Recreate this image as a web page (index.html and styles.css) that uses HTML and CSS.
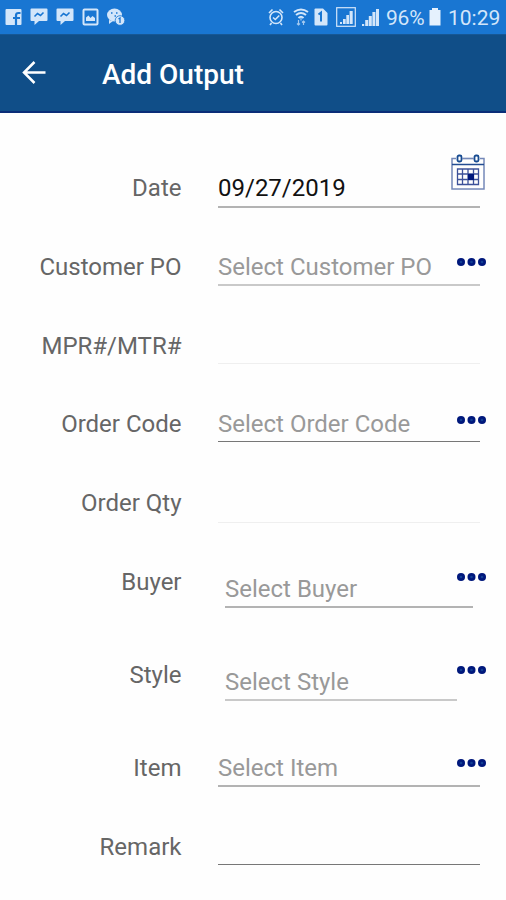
FILE: index.html
```html
<!DOCTYPE html>
<html lang="en">
<head>
<meta charset="utf-8">
<title>Add Output</title>
<link rel="stylesheet" href="styles.css">
</head>
<body>
<svg class="defs" width="0" height="0">
  <symbol id="dots" viewBox="0 0 30 10"><g fill="#00187c"><circle cx="5" cy="5" r="4"/><circle cx="15.500" cy="5" r="4"/><circle cx="26" cy="5" r="4"/></g><g fill="#123f93"><circle cx="5" cy="5" r="1.300"/><circle cx="15.500" cy="5" r="1.300"/><circle cx="26" cy="5" r="1.300"/></g></symbol>
  <symbol id="chat" viewBox="0 0 18 18"><path fill="#d3e6fa" d="M1.500 0.500h15q1 0 1 1v10.500q0 1-1 1H9l-4.500 4v-4h-3q-1 0-1-1V1.500q0-1 1-1z"/><path d="M4.500 8.500l3-3 3 2 3-3" fill="none" stroke="#1976d2" stroke-width="1.600"/></symbol>
</svg>
<div class="status">
  <div class="notices">
    <svg width="17" height="18" viewBox="0 0 17 18"><rect x="0.500" y="1" width="16" height="16" rx="1" fill="#d3e6fa"/><path d="M11 17V7.500q0-2.500 2.500-2.500h2M8 10h7" fill="none" stroke="#1976d2" stroke-width="2.200"/></svg>
    <svg width="18" height="18"><use href="#chat"/></svg>
    <svg width="18" height="18"><use href="#chat"/></svg>
    <svg width="17" height="18" viewBox="0 0 17 18"><rect x="1.500" y="1.500" width="14" height="15" rx="1" fill="none" stroke="#d3e6fa" stroke-width="2"/><path d="M4 13V9.500l2.500-2 2 2.500 2-2 2.500 2V13z" fill="#d3e6fa"/></svg>
    <svg width="18" height="18" viewBox="0 0 18 18"><ellipse cx="7.500" cy="7" rx="7.500" ry="6.500" fill="#d3e6fa"/><path d="M2 12v4l4-3z" fill="#d3e6fa"/><path d="M4 5h1.500M9 5h1.500M7.500 8h1.500" stroke="#1976d2" stroke-width="1.500"/><circle cx="13" cy="12.500" r="4.800" fill="#d3e6fa" stroke="#1976d2" stroke-width=".8"/><path d="M11.500 11l1.500-1v5" fill="none" stroke="#1976d2" stroke-width="1.300"/></svg>
  </div>
  <div class="system">
    <svg class="alarm" width="16" height="18" viewBox="0 0 16 18" fill="none" stroke="#d3e6fa" stroke-width="1.600"><circle cx="8" cy="9.500" r="6"/><path d="M1 5l3.500-3.500M15 5l-3.500-3.500M5 9.500l2.300 2 4-4M3.500 15L2 17M12.500 15l1.500 2"/></svg>
    <svg class="wifi" width="16" height="18" viewBox="0 0 16 18" fill="none" stroke="#d3e6fa" stroke-width="2"><path d="M1 4q7-5 14 0M3 7q5-4 10 0M5.500 10q2.500-2.500 5 0"/><path d="M8 10v2.500M5.500 12v5M4 15.500l1.500 1.500L7 15.500M10.500 17v-4M9 14.500l1.500-1.500 1.500 1.500" stroke-width="1.200" opacity=".75"/></svg>
    <svg class="sim" width="14" height="18" viewBox="0 0 14 18"><path d="M1.500 0.500H9l4.500 4.500v11.500q0 1-1 1h-11q-1 0-1-1v-15q0-1 1-1z" fill="#d3e6fa"/><path d="M4.500 6.500l2.500-2v9" fill="none" stroke="#1976d2" stroke-width="2"/></svg>
    <svg class="boxed" width="20" height="20" viewBox="0 0 20 20"><rect x=".7" y=".7" width="18.600" height="18.600" fill="none" stroke="#d3e6fa" stroke-width="1.200"/><path d="M4 17v-2h2v2zM7 17v-5h2.700v5zM10.300 17V8H13v9zM13.600 17V4h3.100v13z" fill="#d3e6fa"/></svg>
    <svg class="signal" width="17" height="18" viewBox="0 0 17 18"><path d="M0 18v-2h2.200v2zM3.200 18v-6h3v6zM6.800 18V8h3v10zM10.400 18V4h3v14zM14 18V1h3v17z" fill="#d3e6fa"/></svg>
    <span class="percent">96%</span>
    <svg class="battery" width="12" height="18" viewBox="0 0 12 18"><path d="M3 0h6v2h2.500v15.500H.5V2H3z" fill="#e5f1fd"/></svg>
    <span class="clock">10:29</span>
  </div>
</div>
<header class="bar">
  <svg width="26" height="24" viewBox="0 0 26 24"><path d="M13.500 2L3 12.500 13.500 23M3 12.500h21.500" fill="none" stroke="#fff" stroke-width="2.500"/></svg>
  <h1>Add Output</h1>
</header>
<main class="form">
  <div class="row">
    <label>Date</label><div class="field soft value">09/27/2019</div>
    <svg class="calendar" width="34" height="36" viewBox="0 0 34 36"><rect x="1" y="4.500" width="32" height="30.500" fill="none" stroke="#7488b8" stroke-width="1.500"/><path d="M1 10.500h32" stroke="#234c92" stroke-width="1.500"/><path d="M5 3h7M22 3h7" stroke="#fff" stroke-width="5"/><g fill="#fff" stroke="#174b91" stroke-width="1.800"><rect x="6.500" y="1.500" width="4" height="6" rx="1.500"/><rect x="23.500" y="1.500" width="4" height="6" rx="1.500"/></g><path d="M11 4.500h12" stroke="#7488b8" stroke-width="1.200"/><path d="M6.500 15h21v15.500h-21zM6.500 20h21M6.500 25.500h21M11.500 15v15.500M17 15v15.500M22.500 15v15.500" fill="none" stroke="#3c5199" stroke-width="1.300"/><path d="M17 20h6v6h-6z" fill="#00187c"/></svg>
  </div>
  <div class="row"><label>Customer PO</label><div class="field light">Select Customer PO</div><svg class="more"><use href="#dots"/></svg></div>
  <div class="row"><label>MPR#/MTR#</label><div class="field faint"></div></div>
  <div class="row"><label>Order Code</label><div class="field dark">Select Order Code</div><svg class="more"><use href="#dots"/></svg></div>
  <div class="row"><label>Order Qty</label><div class="field faint qty"></div></div>
  <div class="row tall"><label>Buyer</label><div class="field soft inset">Select Buyer</div><svg class="more"><use href="#dots"/></svg></div>
  <div class="row tall"><label>Style</label><div class="field light inset short">Select Style</div><svg class="more"><use href="#dots"/></svg></div>
  <div class="row"><label>Item</label><div class="field soft">Select Item</div><svg class="more"><use href="#dots"/></svg></div>
  <div class="row"><label>Remark</label><div class="field dark"></div></div>
</main>
</body>
</html>
```
FILE: styles.css
```css
* { box-sizing: border-box; }
body { margin: 0; width: 506px; height: 900px; overflow: hidden; background: #fefefe; font-family: Roboto, sans-serif; }
svg { display: block; flex: none; }
.defs { position: absolute; }
.status { height: 34px; padding: 0 6px 0 5px; display: flex; align-items: center; justify-content: space-between; background: #1976d2; color: #d3e6fa; font-size: 21px; }
.notices { display: flex; gap: 8px; }
.system { display: flex; align-items: center; }
.wifi { margin-left: 9px; }
.sim { margin-left: 5px; }
.boxed { margin-left: 8px; }
.signal { margin-left: 6px; }
.percent { margin-left: 7px; width: 39px; padding-top: 1px; letter-spacing: -0.2px; white-space: nowrap; }
.battery { margin-left: 4px; }
.clock { margin-left: 7px; width: 52px; padding-top: 1px; white-space: nowrap; }
.bar { height: 79px; padding: 0 0 2px 21px; display: flex; align-items: center; background: #104e88; border-top: 1px solid #165795; border-bottom: 2px solid #0a2d78; }
.bar h1 { margin: 5px 0 0 55px; color: #fff; font-size: 28px; line-height: 32px; font-weight: 500; }
.form { padding-top: 36px; }
.row { position: relative; height: 78.75px; padding-top: 25px; display: grid; grid-template-columns: 181.5px 262px; column-gap: 36.5px; align-items: start; line-height: 28px; font-size: 24px; }
.tall { height: 93px; }
label { text-align: right; color: #666; white-space: nowrap; }
.field { height: 33px; color: #999; border-bottom: 2px solid #b3b3b3; white-space: nowrap; }
.value { height: 34px; color: #111; }
.light { border-color: #c9c9c9; }
.dark { height: 32px; border-bottom: 1px solid #777; }
.faint { height: 32px; border-bottom: 1px solid #efefef; }
.qty { height: 34px; }
.inset { margin: 7px 7px 0; }
.short { margin-right: 23px; }
.more { position: absolute; left: 456px; top: 29.5px; width: 30px; height: 10px; }
.calendar { position: absolute; left: 451px; top: 5px; }
```
